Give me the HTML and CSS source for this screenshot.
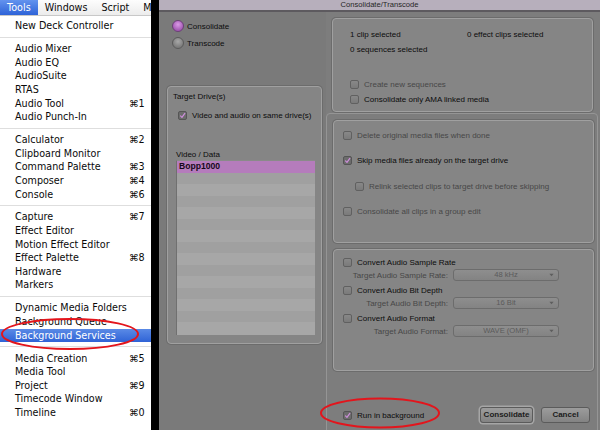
FILE: index.html
```html
<!DOCTYPE html>
<html>
<head>
<meta charset="utf-8">
<title>Consolidate/Transcode</title>
<link rel="stylesheet" href="styles.css">
</head>
<body>
<div class="screen">
  <div class="menu">
    <div class="menubar">
      <span class="mtitle active">Tools</span><span class="mtitle">Windows</span><span class="mtitle">Script</span><span class="mtitle">M</span>
    </div>
    <ul class="items">
      <li>New Deck Controller</li>
      <li class="sep"></li>
      <li>Audio Mixer</li>
      <li>Audio EQ</li>
      <li>AudioSuite</li>
      <li>RTAS</li>
      <li>Audio Tool<span class="key">⌘1</span></li>
      <li>Audio Punch-In</li>
      <li class="sep"></li>
      <li>Calculator<span class="key">⌘2</span></li>
      <li>Clipboard Monitor</li>
      <li>Command Palette<span class="key">⌘3</span></li>
      <li>Composer<span class="key">⌘4</span></li>
      <li>Console<span class="key">⌘6</span></li>
      <li class="sep"></li>
      <li>Capture<span class="key">⌘7</span></li>
      <li>Effect Editor</li>
      <li>Motion Effect Editor</li>
      <li>Effect Palette<span class="key">⌘8</span></li>
      <li>Hardware</li>
      <li>Markers</li>
      <li class="sep"></li>
      <li>Dynamic Media Folders</li>
      <li>Background Queue</li>
      <li class="hl">Background Services</li>
      <li class="sep"></li>
      <li>Media Creation<span class="key">⌘5</span></li>
      <li>Media Tool</li>
      <li>Project<span class="key">⌘9</span></li>
      <li>Timecode Window</li>
      <li>Timeline<span class="key">⌘0</span></li>
    </ul>
  </div>
  <div class="gap"></div>
  <div class="dialog">
    <div class="titlebar">Consolidate/Transcode</div>
    <div class="dbody">
      <div class="lpane">
        <div class="radio-row"><span class="radio on"></span><span>Consolidate</span></div>
        <div class="radio-row"><span class="radio"></span><span>Transcode</span></div>
        <div class="group tgroup">
          <div class="gtitle">Target Drive(s)</div>
          <div class="cb-row same"><span class="cb checked"><svg viewBox="0 0 9 9"><path d="M2 5 L3.8 7 L7.5 1.8"/></svg></span><span>Video and audio on same drive(s)</span></div>
          <div class="vd">Video / Data</div>
          <div class="list">
            <div class="row sel">Bopp1000</div>
            <div class="row"></div><div class="row"></div><div class="row"></div><div class="row"></div>
            <div class="row"></div><div class="row"></div><div class="row"></div><div class="row"></div>
            <div class="row"></div><div class="row"></div><div class="row"></div><div class="row"></div>
            <div class="row"></div><div class="row"></div>
          </div>
        </div>
      </div>
      <div class="rpane">
        <div class="group info">
          <div class="counts">
            <span>1 clip selected</span><span>0 effect clips selected</span>
            <span>0 sequences selected</span><span></span>
          </div>
          <div class="cb-row dis first"><span class="cb"></span><span>Create new sequences</span></div>
          <div class="cb-row"><span class="cb"></span><span>Consolidate only AMA linked media</span></div>
        </div>
        <div class="wrap">
          <div class="group opts">
            <div class="cb-row dis"><span class="cb"></span><span>Delete original media files when done</span></div>
            <div class="cb-row"><span class="cb checked"><svg viewBox="0 0 9 9"><path d="M2 5 L3.8 7 L7.5 1.8"/></svg></span><span>Skip media files already on the target drive</span></div>
            <div class="cb-row dis indent"><span class="cb"></span><span>Relink selected clips to target drive before skipping</span></div>
            <div class="cb-row dis"><span class="cb"></span><span>Consolidate all clips in a group edit</span></div>
          </div>
          <div class="group audio">
            <div class="cb-row"><span class="cb"></span><span>Convert Audio Sample Rate</span></div>
            <div class="dd-row"><span class="ddlabel">Target Audio Sample Rate:</span><span class="dd">48 kHz<svg viewBox="0 0 6 4"><path d="M0.5 0.5 L3 3.5 L5.5 0.5Z"/></svg></span></div>
            <div class="cb-row"><span class="cb"></span><span>Convert Audio Bit Depth</span></div>
            <div class="dd-row"><span class="ddlabel">Target Audio Bit Depth:</span><span class="dd">16 Bit<svg viewBox="0 0 6 4"><path d="M0.5 0.5 L3 3.5 L5.5 0.5Z"/></svg></span></div>
            <div class="cb-row"><span class="cb"></span><span>Convert Audio Format</span></div>
            <div class="dd-row"><span class="ddlabel">Target Audio Format:</span><span class="dd">WAVE (OMF)<svg viewBox="0 0 6 4"><path d="M0.5 0.5 L3 3.5 L5.5 0.5Z"/></svg></span></div>
          </div>
          <div class="bottom">
            <div class="cb-row run"><span class="cb checked"><svg viewBox="0 0 9 9"><path d="M2 5 L3.8 7 L7.5 1.8"/></svg></span><span>Run in background</span></div>
            <div class="buttons">
              <span class="btn def">Consolidate</span>
              <span class="btn">Cancel</span>
            </div>
          </div>
        </div>
      </div>
    </div>
  </div>
  <svg class="marks" viewBox="0 0 600 430">
    <ellipse cx="70" cy="334" rx="68" ry="15"/>
    <ellipse cx="380" cy="413" rx="59" ry="14.5"/>
  </svg>
</div>
</body>
</html>
```

FILE: styles.css
```css
* { box-sizing: border-box; }
html, body { margin: 0; padding: 0; }
body { background: #000; width: 600px; height: 430px; overflow: hidden; }

.screen {
  position: relative;
  display: flex;
  width: 600px;
  height: 430px;
  overflow: hidden;
}

/* ---------- Menu ---------- */
.menu {
  width: 151px;
  flex: none;
  background: #fff;
  font-family: "DejaVu Sans", sans-serif;
  font-size: 9.6px;
  color: #0a0a0a;
}
.menubar {
  display: flex;
  height: 16px;
  background: linear-gradient(#fdfdfd, #ececec);
  border-bottom: 1px solid #c8c8c8;
  white-space: nowrap;
  overflow: hidden;
}
.mtitle {
  padding: 0 7px;
  line-height: 15px;
}
.mtitle.active {
  background: linear-gradient(#6393ee, #2e63d8);
  color: #fff;
}
.items {
  list-style: none;
  margin: 0;
  padding: 3.2px 0 0 0;
}
.items li {
  display: flex;
  justify-content: space-between;
  height: 13.6px;
  line-height: 13.6px;
  padding: 0 6px 0 15px;
  white-space: nowrap;
}
.items li.sep {
  height: 9.4px;
  padding: 0;
}
.items li.sep::after {
  content: "";
  display: block;
  margin-top: 4px;
  height: 1px;
  width: 100%;
  background: #dedede;
}
.items li.hl {
  background: linear-gradient(#5a8ae6, #2f63d6);
  color: #fff;
}
.key { width: 16px; text-align: left; }

.gap { width: 8px; flex: none; background: #000; }

/* ---------- Dialog ---------- */
.dialog {
  width: 441px;
  flex: none;
  background: #7d7d7d;
  font-family: "Liberation Sans", Arial, sans-serif;
  font-size: 8px;
  color: #0c0c0c;
  display: flex;
  flex-direction: column;
}
.titlebar {
  height: 12px;
  flex: none;
  background: #b7afbc;
  border-bottom: 2px solid #5d5a5f;
  text-align: center;
  font-size: 7.6px;
  line-height: 9px;
  color: #262626;
}
.dbody {
  display: flex;
  flex: 1;
}
.lpane {
  width: 167px;
  flex: none;
  padding-top: 8px;
  background: #7a7a7a;
}
.rpane {
  flex: 1;
  padding-top: 6px;
}

.radio-row {
  display: flex;
  align-items: center;
  gap: 3px;
  height: 12px;
  padding-left: 13px;
  margin-bottom: 5px;
  font-size: 8px;
}
.radio {
  width: 12px;
  height: 12px;
  border-radius: 50%;
  border: 1px solid #5a5a5a;
  background: radial-gradient(circle at 50% 35%, #a8a8a8, #7c7c7c 70%);
}
.radio.on {
  border-color: #6b3f76;
  background: radial-gradient(circle at 50% 35%, #d99ae6, #a45ab4 70%);
}

.group {
  background: #858585;
  border: 1px solid #a0a0a0;
  border-radius: 4px;
  box-shadow: 0 0 0 1px #6c6c6c;
}

.tgroup {
  margin: 37px 4px 0 8px;
  height: 258px;
  padding: 5px 0 0 5px;
}
.gtitle { line-height: 9px; height: 9px; }

.cb-row {
  display: flex;
  align-items: center;
  height: 9px;
  gap: 5px;
  white-space: nowrap;
}
.cb-row.dis { color: #474747; }
.cb {
  width: 9px;
  height: 9px;
  flex: none;
  border: 1px solid #606060;
  border-radius: 2px;
  background: linear-gradient(#888, #7a7a7a);
  display: flex;
}
.cb.checked { background: #6c6c6c; border-color: #555; }
.cb svg { width: 7px; height: 7px; }
.cb path { fill: none; stroke: #cf8fdd; stroke-width: 1.5; stroke-linecap: round; stroke-linejoin: round; }

.cb-row.same { margin: 10px 0 0 5px; }
.vd { margin: 30px 0 0 3px; line-height: 9px; height: 9px; }
.list {
  margin: 1px 0 0 3px;
  width: 139px;
  height: 175px;
  background: #a7a7a7;
  border-left: 1px solid #707070;
  border-top: 1px solid #8a8a8a;
  overflow: hidden;
}
.row { height: 11.5px; }
.row:nth-child(even) { background: #a0a0a0; }
.row.sel {
  background: #b57cbc;
  font-weight: bold;
  font-size: 8.6px;
  line-height: 11.5px;
  padding-left: 2px;
  color: #16081a;
}

/* info box */
.info {
  margin-left: 6px;
  width: 261px;
  height: 94px;
  padding: 11px 0 0 17px;
}
.counts {
  display: grid;
  grid-template-columns: 117px auto;
  row-gap: 6px;
  line-height: 9px;
}
.info .cb-row.first { margin-top: 26px; }
.info .cb-row + .cb-row { margin-top: 6px; }

/* outer options container */
.wrap {
  margin-top: 1px;
  width: 272px;
  height: 340px;
  border: 1px solid #959595;
  border-radius: 4px;
  padding: 6px 0 0 6px;
}
.opts {
  width: 261px;
  height: 123px;
  padding: 10px 0 0 9px;
  display: flex;
  flex-direction: column;
  gap: 16.3px;
}
.opts .indent { margin-left: 12px; }

.audio {
  margin-top: 6px;
  width: 261px;
  height: 122px;
  padding: 8px 0 0 9px;
  display: flex;
  flex-direction: column;
}
.audio .cb-row + .dd-row { margin-top: 2px; }
.audio .dd-row + .cb-row { margin-top: 5px; }
.dd-row {
  display: flex;
  align-items: center;
  height: 12px;
  margin-left: -9px;
  gap: 5px;
}
.ddlabel {
  width: 114px;
  text-align: right;
  color: #474747;
}
.dd {
  position: relative;
  width: 106px;
  height: 12px;
  border: 1px solid #6c6c6c;
  border-radius: 3px;
  background: linear-gradient(#8e8e8e, #838383);
  color: #5b5b5b;
  text-align: center;
  line-height: 10px;
  font-size: 7.6px;
}
.dd svg {
  position: absolute;
  right: 4px;
  top: 3px;
  width: 5px;
  height: 4px;
}
.dd path { fill: #5d5d5d; }

.bottom {
  margin-top: 36px;
  display: flex;
  align-items: center;
  justify-content: space-between;
  width: 261px;
  padding: 0 4px 0 10px;
  height: 16px;
}
.buttons { display: flex; gap: 8px; }
.btn {
  height: 16px;
  border: 1px solid #5b5b5b;
  border-radius: 3px;
  background: linear-gradient(#9c9c9c, #838383);
  font-weight: bold;
  font-size: 8px;
  line-height: 14px;
  text-align: center;
  color: #1c1c1c;
}
.btn.def { width: 53px; box-shadow: 0 0 0 1.5px #a6a6a6; }
.btn:not(.def) { width: 49px; }

/* annotations */
.marks {
  position: absolute;
  left: 0;
  top: 0;
  width: 600px;
  height: 430px;
  pointer-events: none;
}
.marks ellipse { fill: none; stroke: #e3151c; stroke-width: 2; }
```
